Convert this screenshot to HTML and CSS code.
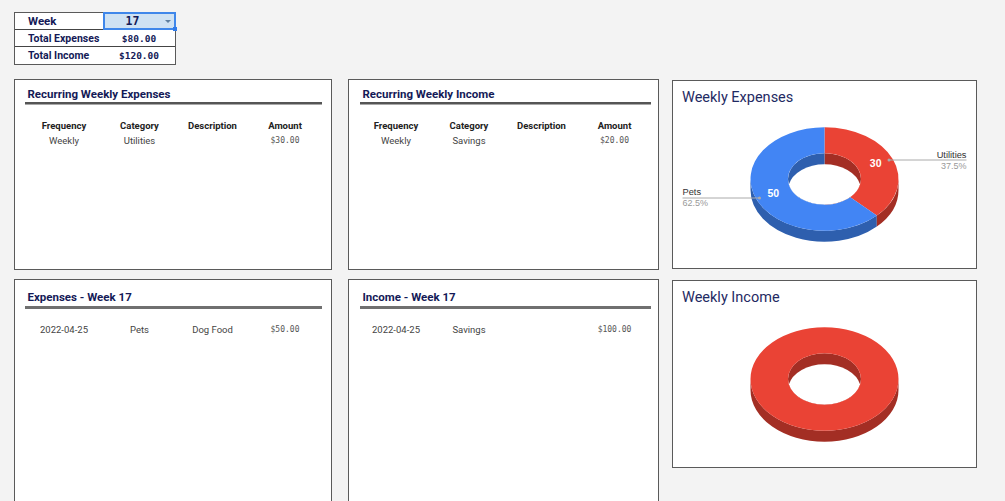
FILE: index.html
```html
<!DOCTYPE html>
<html lang="en">
<head>
<meta charset="utf-8">
<title>Weekly Budget</title>
<link rel="stylesheet" href="styles.css">
</head>
<body>
<main class="page">
  <section class="summary">
    <div class="summary-label summary-label-large">Week</div>
    <div class="summary-select"><span>17</span><i class="caret"></i><i class="handle"></i></div>
    <div class="summary-label">Total Expenses</div>
    <div class="summary-value">$80.00</div>
    <div class="summary-label">Total Income</div>
    <div class="summary-value">$120.00</div>
  </section>

  <section class="board">
    <article class="panel panel-left">
      <h2 class="panel-title">Recurring Weekly Expenses</h2>
      <div class="rule rule-double"></div>
      <div class="data data-left data-head"><b>Frequency</b><b>Category</b><b>Description</b><b>Amount</b></div>
      <div class="data data-left"><span>Weekly</span><span>Utilities</span><span></span><span class="money">$30.00</span></div>
    </article>
    <article class="panel panel-mid">
      <h2 class="panel-title">Recurring Weekly Income</h2>
      <div class="rule rule-double"></div>
      <div class="data data-mid data-head"><b>Frequency</b><b>Category</b><b>Description</b><b>Amount</b></div>
      <div class="data data-mid"><span>Weekly</span><span>Savings</span><span></span><span class="money">$20.00</span></div>
    </article>
    <article class="chart chart-top">
      <h2 class="chart-title">Weekly Expenses</h2>
      <svg class="chart-svg" viewBox="673 115 303 152" aria-label="Weekly Expenses donut chart">
        <path d="M750.5 179A74 51.7 0 0 0 876.8 215.6V226.6A74 51.7 0 0 1 750.5 190Z" fill="#2e5fae"/>
        <path d="M876.8 215.6A74 51.7 0 0 0 898.5 179V190A74 51.7 0 0 1 876.8 226.6Z" fill="#a32e24"/>
        <path d="M824.5 153.2A36.5 25.8 0 0 1 824.5 204.8Z" fill="#a32e24"/>
        <path d="M824.5 153.2A36.5 25.8 0 0 0 824.5 204.8Z" fill="#2e5fae"/>
        <path d="M788.84 184.5A36.5 25.8 0 0 1 860.16 184.5A36.5 25.8 0 0 1 788.84 184.5Z" fill="#fff"/>
        <path d="M824.5 127.3A74 51.7 0 0 1 876.8 215.6L850.3 197.2A36.5 25.8 0 0 0 824.5 153.2Z" fill="#ea4335"/>
        <path d="M824.5 127.3A74 51.7 0 1 0 876.8 215.6L850.3 197.2A36.5 25.8 0 1 1 824.5 153.2Z" fill="#4285f4"/>
        <path d="M889 160H966.5M682.5 198H759.5" stroke="#aaa" fill="none"/>
        <circle cx="889" cy="160" r="1.5" fill="#aaa"/>
        <circle cx="759.5" cy="198" r="1.5" fill="#aaa"/>
        <text class="slice-value" x="875.7" y="167">30</text>
        <text class="slice-value" x="773.3" y="197">50</text>
        <text class="legend-name legend-end" x="966.5" y="158">Utilities</text>
        <text class="legend-pct legend-end" x="966.5" y="168.5">37.5%</text>
        <text class="legend-name" x="682.5" y="195">Pets</text>
        <text class="legend-pct" x="682.5" y="206">62.5%</text>
      </svg>
    </article>

    <article class="panel panel-left panel-low">
      <h2 class="panel-title">Expenses - Week 17</h2>
      <div class="rule"></div>
      <div class="data data-left data-first"><span>2022-04-25</span><span>Pets</span><span>Dog Food</span><span class="money">$50.00</span></div>
    </article>
    <article class="panel panel-mid panel-low">
      <h2 class="panel-title">Income - Week 17</h2>
      <div class="rule"></div>
      <div class="data data-mid data-first"><span>2022-04-25</span><span>Savings</span><span></span><span class="money">$100.00</span></div>
    </article>
    <article class="chart chart-low">
      <h2 class="chart-title">Weekly Income</h2>
      <svg class="chart-svg" viewBox="673 115 303 152" aria-label="Weekly Income donut chart">
        <path d="M750.5 179A74 51.7 0 0 0 898.5 179V190A74 51.7 0 0 1 750.5 190Z" fill="#a32e24"/>
        <ellipse cx="824.5" cy="179" rx="36.5" ry="25.8" fill="#a32e24"/>
        <path d="M788.84 184.5A36.5 25.8 0 0 1 860.16 184.5A36.5 25.8 0 0 1 788.84 184.5Z" fill="#fff"/>
        <path fill-rule="evenodd" d="M750.5 179A74 51.7 0 0 1 898.5 179A74 51.7 0 0 1 750.5 179ZM788 179A36.5 25.8 0 0 0 861 179A36.5 25.8 0 0 0 788 179Z" fill="#ea4335"/>
      </svg>
    </article>
  </section>
</main>
</body>
</html>
```

FILE: styles.css
```css
* {
  box-sizing: border-box;
}

html,
body {
  margin: 0;
  height: 501px;
  overflow: hidden;
  background: #f3f3f3;
}

body {
  font-family: Roboto, "Liberation Sans", sans-serif;
  color: #333;
}

.page {
  padding: 12px 0 0 14px;
}

.summary {
  display: grid;
  grid-template-columns: 88px 72px;
  grid-template-rows: 17px 17px 17px;
  width: 162px;
  height: 53px;
  background: #fff;
  border: 1px solid #5a5a5a;
}

.summary-label,
.summary-value,
.summary-select {
  display: flex;
  align-items: center;
  color: #141a57;
  border-bottom: 1px solid #444;
}

.summary > :nth-last-child(-n + 2) {
  border-bottom: 0;
}

.summary-label {
  padding-left: 13px;
  font-size: 10.5px;
  font-weight: 700;
}

.summary-label-large {
  font-size: 11.5px;
}

.summary-value,
.summary-select {
  justify-content: center;
  font-family: "DejaVu Sans Mono", monospace;
  font-size: 9.5px;
  font-weight: 700;
}

.summary-select {
  position: relative;
  margin: -1px -1px 0 0;
  padding-right: 14px;
  height: 18px;
  background: #cfe2f3;
  border: 2px solid #3f87ea;
  font-size: 11.5px;
}

.caret {
  position: absolute;
  right: 3px;
  top: 6px;
  border: 3px solid transparent;
  border-top: 3px solid #5f7f9f;
  border-bottom: 0;
}

.handle {
  position: absolute;
  right: -2.5px;
  bottom: -3px;
  width: 4px;
  height: 4px;
  background: #2f7bea;
}

.board {
  display: grid;
  grid-template-columns: 318px 314px 305px;
  grid-template-rows: 191px 240px;
  column-gap: 13px;
  row-gap: 9px;
  margin-top: 14px;
}

.panel {
  background: #fff;
  border: 1px solid #5a5a5a;
  padding-top: 6px;
}

.panel-left {
  padding-left: 9.5px;
  padding-right: 9px;
}

.panel-mid {
  margin-left: 3px;
  padding-left: 10.5px;
  padding-right: 7px;
}

.panel-low {
  padding-top: 9px;
}

.panel-title {
  margin: 0;
  padding-left: 3px;
  height: 16px;
  line-height: 16px;
  font-size: 11.5px;
  font-weight: 700;
  color: #141a57;
}

.rule {
  height: 3px;
  background: #707070;
  margin-top: 1px;
}

.rule-double {
  border-top: 2px solid #555;
  background: #a8a8a8;
  margin-top: 0;
  margin-bottom: 1px;
  height: 3px;
}

.data {
  display: grid;
  height: 15px;
  align-items: center;
  text-align: center;
  font-size: 9.5px;
  line-height: 15px;
  color: #444;
}

.data b {
  color: #222;
  font-weight: 700;
}

.data-head {
  margin-top: 13px;
}

.data-first {
  margin-top: 13px;
}

.data-left {
  grid-template-columns: 79px 72px 74px 71px;
}

.data-mid {
  grid-template-columns: 73px 73px 72px 74px;
}

.money {
  font-family: "DejaVu Sans Mono", monospace;
  font-size: 8px;
  color: #555;
}

.chart {
  background: #fff;
  border: 1px solid #5a5a5a;
}

.chart-top {
  margin-top: 1px;
  height: 189px;
}

.chart-low {
  margin-top: 1px;
  height: 188px;
}

.chart-title {
  margin: 0;
  padding: 8px 0 0 9px;
  height: 34px;
  font-size: 14.5px;
  line-height: 18px;
  font-weight: 400;
  color: #1f2a63;
}

.chart-svg {
  display: block;
  width: 303px;
  height: 152px;
}

.slice-value {
  font-family: "Liberation Sans", sans-serif;
  font-size: 10.5px;
  font-weight: 700;
  fill: #fff;
  text-anchor: middle;
}

.legend-name {
  font-family: "Liberation Sans", sans-serif;
  font-size: 9.25px;
  fill: #333;
}

.legend-pct {
  font-family: "Liberation Sans", sans-serif;
  font-size: 9px;
  fill: #999;
}

.legend-end {
  text-anchor: end;
}
```
